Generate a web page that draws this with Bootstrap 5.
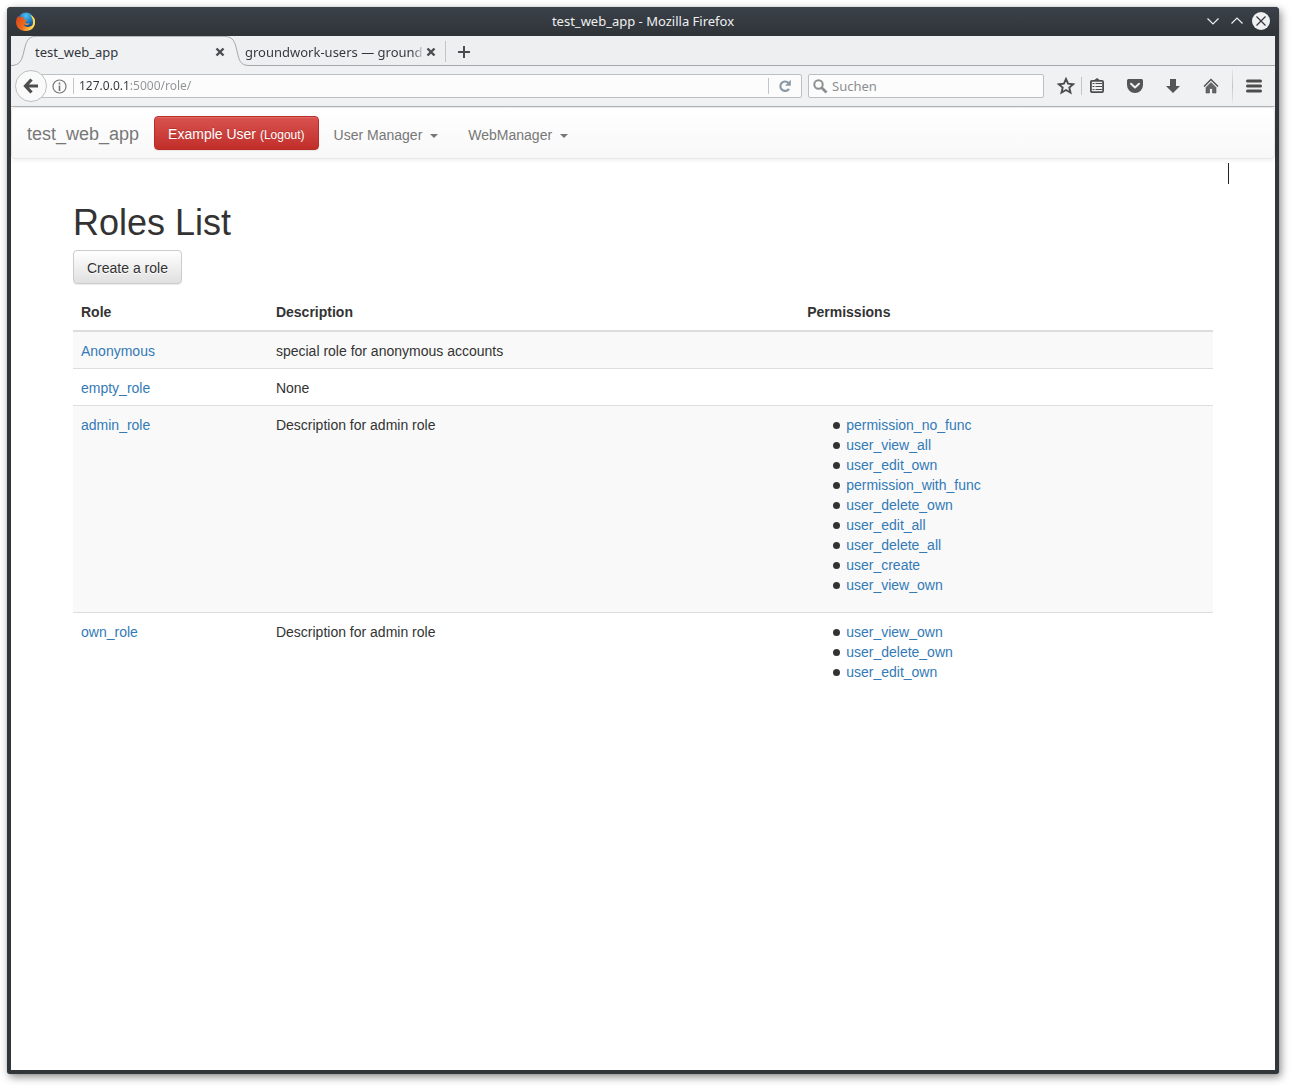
<!DOCTYPE html>
<html lang="en">
<head>
<meta charset="utf-8">
<meta name="viewport" content="width=device-width, initial-scale=1">
<title>test_web_app - Mozilla Firefox</title>
<link rel="stylesheet" href="https://cdn.jsdelivr.net/npm/bootstrap@5.3.0/dist/css/bootstrap.min.css">
<style>
  body { font-family: "Liberation Sans", Arial, sans-serif; font-size: 14px; line-height: 20px; color: #333; background: #fff; padding: 7px 13px 13px 7px; }
  svg { display: block; }
  .app-window { background: #31363b; border-radius: 4px 4px 3px 3px; box-shadow: 2px 3px 8px rgba(0,0,0,.45), 0 0 1px rgba(0,0,0,.35); }
  .chrome-text { font-family: "Noto Sans", sans-serif; font-size: 13px; line-height: 18px; }
  .plain-btn { border: 0; background: none; padding: 0; display: flex; align-items: center; justify-content: center; flex: none; }
  .title-bar { height: 29px; padding: 0 9px 1px; color: #eff0f1; background: linear-gradient(#3b4148, #2f3439); border-radius: 4px 4px 0 0; }
  .title-bar .plain-btn { width: 18px; height: 18px; }
  .window-controls { gap: 6px; }
  .window-body { margin: 0 4px 4px; background: #fff; }

  .tab-strip { height: 30px; background: #eeeff1; color: #31363b; }
  .tab-front { width: 190px; background: #f0f1f3; border-top: 1px solid #b4b8bb; }
  .tab-back { width: 196px; border-bottom: 1px solid #a5a8ab; padding: 2px 9px 0 0; }
  .tab-label { flex: 1; white-space: nowrap; color: inherit; text-decoration: none; }
  .tab-back .tab-label { margin-left: -4px; }
  .tab-fade { background: linear-gradient(90deg, #31363b 94%, #d0d2d4); -webkit-background-clip: text; background-clip: text; -webkit-text-fill-color: transparent; }
  .tab-close { width: 10px; height: 10px; }
  .tab-rest { border-bottom: 1px solid #a5a8ab; padding-top: 2px; }
  .v-rule { width: 1px; height: 16px; background: #c3c6c8; flex: none; }
  .v-rule.tab-rule { height: 21px; }
  .v-rule.url-rule { margin: 0 5px 0 6px; }
  .v-rule.star-rule { height: 18px; margin: 0 3px; }
  .v-rule.menu-rule { height: 34px; margin: 0 9px; background: linear-gradient(#e6e8ea, #c3c6c8, #e6e8ea); }

  .tool-bar { height: 41px; background: #f0f1f3; border-bottom: 1px solid #b5b9bc; padding: 0 9px 0 4px; color: #4d4d4d; }
  .back-btn { width: 32px; height: 32px; border: 1px solid #bcc0c3; border-radius: 50%; background: #fafafa; z-index: 1; }
  .field-box { height: 24px; background: #fcfcfc; border: 1px solid #bcc0c3; border-radius: 2px; }
  .url-box { margin-left: -16px; padding-left: 20px; }
  .bare-input { border: 0; outline: 0; padding: 0; min-width: 0; background: transparent; flex: 1; height: 18px; }
  .url-input { font-size: 12px; background: linear-gradient(90deg, #31363b 51px, #8f9294 51px); -webkit-background-clip: text; background-clip: text; -webkit-text-fill-color: transparent; }
  .reload-btn { width: 32px; }
  .search-box { width: 236px; margin-left: 6px; padding-left: 4px; }
  .search-input { color: #8c8f91; }
  .search-input::placeholder { color: #8c8f91; opacity: 1; }
  .tool-group { margin-left: 10px; }
  .tool-icons { gap: 14px; margin-left: 14px; }
  .tool-btn { width: 24px; height: 24px; color: inherit; }

  .site-nav { min-height: 52px; border: 1px solid #e7e7e7; border-radius: 4px; background: linear-gradient(#fff, #f8f8f8); box-shadow: inset 0 1px 0 rgba(255,255,255,.15), 0 1px 5px rgba(0,0,0,.075); padding: 0; }
  .site-nav .navbar-brand { font-size: 18px; line-height: 20px; color: #777; padding: 16px 15px 14px; margin: 0; }
  .site-nav .navbar-nav .nav-link { color: #777; padding: 17px 15px 13px; font-size: 14px; line-height: 20px; }
  .site-nav .dropdown-toggle::after { border-top-width: 4px; border-right-width: 4px; border-left-width: 4px; margin-left: 8px; vertical-align: 2px; }
  .grad-btn { font-size: 14px; line-height: 20px; padding: 7px 13px 5px; border-radius: 4px; }
  .btn-logout { color: #fff; border-color: #b92c28; background: linear-gradient(#d9534f, #c12e2a); text-shadow: 0 -1px 0 rgba(0,0,0,.2); box-shadow: inset 0 1px 0 rgba(255,255,255,.15), 0 1px 1px rgba(0,0,0,.075); }
  .btn-logout small { font-size: 12px; line-height: 12px; }
  .btn-create { color: #333; border-color: #ccc; background: linear-gradient(#fff, #e0e0e0); text-shadow: 0 1px 0 #fff; box-shadow: inset 0 1px 0 rgba(255,255,255,.15), 0 1px 1px rgba(0,0,0,.075); }
  .page-wrap { max-width: 1170px; padding: 44px 15px 0; }
  .page-title { font-size: 36px; line-height: 40px; font-weight: 400; margin: 0 0 7px; }
  .pointer-mark { top: 56px; right: 46px; width: 1px; height: 21px; background: #222; }

  .roles-table { --bs-table-color: #333; --bs-table-striped-color: #333; --bs-table-striped-bg: #f9f9f9; border-color: #ddd; margin: 10px 0 20px; }
  .roles-table > :not(caption) > * > * { padding: 9px 8px 7px; border-bottom: 0; border-top: 1px solid #ddd; }
  .roles-table > thead > tr > th { padding: 8px; border-top: 0; border-bottom: 2px solid #ddd; }
  .roles-table > tbody > tr:first-child > td { border-top: 0; }
  .roles-table a { color: #337ab7; text-decoration: none; }
  .col-role { width: 17.1%; }
  .col-desc { width: 46.6%; }
  .perm-list { list-style: none; padding-left: 26px; margin: 0 0 10px; }
  .perm-list li { display: flex; align-items: center; }
  .perm-list li::before { content: ""; width: 7px; height: 7px; border-radius: 50%; background: #333; margin-right: 6px; }
</style>
<script src="https://cdn.jsdelivr.net/npm/bootstrap@5.3.0/dist/js/bootstrap.bundle.min.js"></script>
</head>
<body class="min-vh-100 d-flex flex-column">
<div class="app-window flex-grow-1 d-flex flex-column">

  <header class="title-bar chrome-text d-flex align-items-center">
    <div class="flex-fill w-100">
      <svg width="19" height="19" viewBox="0 0 38 38" aria-hidden="true">
        <defs>
          <radialGradient id="globe" cx=".5" cy=".2" r=".8"><stop offset="0" stop-color="#4fc3ee"/><stop offset=".55" stop-color="#1b78c2"/><stop offset="1" stop-color="#14346f"/></radialGradient>
          <linearGradient id="fox" x1="0" y1="0" x2="1" y2=".4"><stop offset="0" stop-color="#d8431a"/><stop offset=".55" stop-color="#ee6a1c"/><stop offset="1" stop-color="#ffd24a"/></linearGradient>
        </defs>
        <circle cx="20" cy="17" r="16" fill="url(#globe)"/>
        <path d="M4 8l3 3c3-2 6-2 8-1-1 2 0 4 2 5l5 1c0 2-3 3-4 4 1 4 6 3 9 3-3 4-9 4-12 1 2 5 8 7 13 5 7-2 9-8 7-14-1-3-2-5-4-7 6 3 7 6 7 12 0 10-8 18-19 18S0 30 0 20C0 15 2 11 4 8z" fill="url(#fox)"/>
        <path d="M28 5c7 3 10 9 10 15 0 8-5 15-13 17 7-5 9-11 9-17 0-6-3-11-6-15z" fill="#ffd84f"/>
      </svg>
    </div>
    <div class="text-nowrap">test_web_app - Mozilla Firefox</div>
    <div class="window-controls flex-fill w-100 d-flex justify-content-end">
      <button type="button" class="plain-btn" aria-label="Minimize"><svg width="18" height="18" viewBox="0 0 18 18"><path d="M3.500 6.500L9 12l5.500-5.500" fill="none" stroke="#eff0f1" stroke-width="1.200"/></svg></button>
      <button type="button" class="plain-btn" aria-label="Maximize"><svg width="18" height="18" viewBox="0 0 18 18"><path d="M3.500 11.500L9 6l5.500 5.500" fill="none" stroke="#eff0f1" stroke-width="1.200"/></svg></button>
      <button type="button" class="plain-btn" aria-label="Close window"><svg width="18" height="18" viewBox="0 0 18 18"><circle cx="9" cy="9" r="9" fill="#eff0f1"/><path d="M4.500 4.500l9 9M13.500 4.500l-9 9" stroke="#31363b" stroke-width="1.200"/></svg></button>
    </div>
  </header>

  <div class="window-body flex-grow-1 d-flex flex-column">
    <div class="tab-strip chrome-text d-flex">
      <svg class="flex-shrink-0" width="24" height="30" viewBox="0 0 24 30" aria-hidden="true"><path d="M0 29.500C9 29.500 11 24 13 15S17 .5 24 .5V30H0z" fill="#f0f1f3"/><path d="M0 29.500C9 29.500 11 24 13 15S17 .5 24 .5" fill="none" stroke="#a5a8ab"/></svg>
      <div class="tab-front d-flex align-items-center">
        <a href="#" class="tab-label">test_web_app</a>
        <button type="button" class="plain-btn tab-close" aria-label="Close tab"><svg width="10" height="10" viewBox="0 0 10 10"><path d="M1.500 1.500l7 7M8.500 1.500l-7 7" stroke="#4a4d4f" stroke-width="2.400"/></svg></button>
      </div>
      <svg class="flex-shrink-0" width="24" height="30" viewBox="0 0 24 30" aria-hidden="true"><path d="M0 .5C8 .5 10 6 12 15S15 29.500 24 29.500V30H0z" fill="#f0f1f3"/><path d="M0 .5C8 .5 10 6 12 15S15 29.500 24 29.500" fill="none" stroke="#a5a8ab"/></svg>
      <div class="tab-back d-flex align-items-center">
        <a href="#" class="tab-label"><span class="tab-fade">groundwork-users — ground</span></a>
        <button type="button" class="plain-btn tab-close" aria-label="Close tab"><svg width="10" height="10" viewBox="0 0 10 10"><path d="M1.500 1.500l7 7M8.500 1.500l-7 7" stroke="#4a4d4f" stroke-width="2.400"/></svg></button>
      </div>
      <div class="tab-rest flex-grow-1 d-flex align-items-center">
        <span class="v-rule tab-rule"></span>
        <button type="button" class="plain-btn ms-2" aria-label="New tab"><svg width="20" height="20" viewBox="0 0 20 20"><path d="M10 4v12M4 10h12" stroke="#4a4d4f" stroke-width="2"/></svg></button>
      </div>
    </div>

    <div class="tool-bar chrome-text d-flex align-items-center">
      <button type="button" class="plain-btn back-btn" aria-label="Back"><svg width="16" height="16" viewBox="0 0 16 16"><path d="M8.500 1.500L2.500 8l6 6.500M3 8h12" fill="none" stroke="#4d4d4d" stroke-width="3.200"/></svg></button>
      <div class="field-box url-box flex-grow-1 d-flex align-items-center">
        <svg class="flex-shrink-0" width="15" height="15" viewBox="0 0 15 15" aria-hidden="true"><circle cx="7.500" cy="7.500" r="6.500" fill="none" stroke="#737679" stroke-width="1.200"/><path d="M7.500 3.500v2M7.500 6.500V12" stroke="#737679" stroke-width="1.600"/></svg>
        <span class="v-rule url-rule"></span>
        <input type="text" class="bare-input url-input" aria-label="Address" value="127.0.0.1:5000/role/">
        <span class="v-rule"></span>
        <button type="button" class="plain-btn reload-btn" aria-label="Reload"><svg width="14" height="14" viewBox="0 0 14 14"><path d="M10.500 4A4.700 4.700 0 1 0 11 9.800" fill="none" stroke="#8b98a5" stroke-width="2.200"/><path d="M12.800.8v5.900H7z" fill="#8b98a5"/></svg></button>
      </div>
      <div class="field-box search-box d-flex align-items-center flex-shrink-0">
        <svg class="flex-shrink-0 me-1" width="15" height="15" viewBox="0 0 15 15" aria-hidden="true"><circle cx="5.500" cy="5.500" r="4.200" fill="none" stroke="#8c8f91" stroke-width="2"/><path d="M8.500 8.500l5 5" stroke="#8c8f91" stroke-width="2.600"/></svg>
        <input type="search" class="bare-input search-input" aria-label="Suchen" placeholder="Suchen">
      </div>
      <div class="tool-group d-flex align-items-center flex-shrink-0">
        <button type="button" class="plain-btn tool-btn" aria-label="Bookmark"><svg width="18" height="18" viewBox="0 0 18 18"><path d="M9 2l2.100 4.700 5.100.5-3.900 3.400 1.200 5L9 13l-4.500 2.600 1.200-5L1.800 7.200l5.100-.5z" fill="none" stroke="currentColor" stroke-width="1.900"/></svg></button>
        <span class="v-rule star-rule"></span>
        <button type="button" class="plain-btn tool-btn" aria-label="Bookmark list"><svg width="16" height="16" viewBox="0 0 16 16"><path d="M4 3L8 0l4 3z" fill="currentColor"/><rect x="1.900" y="2.900" width="12.200" height="11.200" rx="1" fill="none" stroke="currentColor" stroke-width="1.800"/><path d="M3.500 5.500h2M3.500 8.500h2M3.500 11.500h2M6.500 5.500h6.500M6.500 8.500h6.500M6.500 11.500h6.500" stroke="currentColor"/></svg></button>
        <div class="tool-icons d-flex">
          <button type="button" class="plain-btn tool-btn" aria-label="Pocket"><svg width="16" height="16" viewBox="0 0 16 16"><path d="M1.500 1h13A1.500 1.500 0 0 1 16 2.500V7A8 8 0 0 1 0 7V2.500A1.500 1.500 0 0 1 1.500 1z" fill="#555"/><path d="M4 5.800l4 3.700 4-3.700" fill="none" stroke="#f0f1f3" stroke-width="2" stroke-linecap="round" stroke-linejoin="round"/></svg></button>
          <button type="button" class="plain-btn tool-btn" aria-label="Downloads"><svg width="16" height="16" viewBox="0 0 16 16"><path d="M5 1h6v7h4l-7 7-7-7h4z" fill="#555"/></svg></button>
          <button type="button" class="plain-btn tool-btn" aria-label="Home"><svg width="16" height="16" viewBox="0 0 16 16"><path d="M1 8.500l7-7 7 7" fill="none" stroke="currentColor" stroke-width="1.400"/><path d="M3 9.500l5-5 5 5V15H9.500v-4.500h-3V15H3z" fill="#666" stroke="currentColor" stroke-width=".6"/></svg></button>
        </div>
        <span class="v-rule menu-rule"></span>
        <button type="button" class="plain-btn tool-btn" aria-label="Menu"><svg width="16" height="14" viewBox="0 0 16 14"><path d="M1.500 2h13M1.500 7h13M1.500 12h13" stroke="currentColor" stroke-width="3" stroke-linecap="round"/></svg></button>
      </div>
    </div>

    <div class="position-relative">
      <nav class="navbar navbar-expand site-nav">
        <div class="d-flex align-items-center">
          <a class="navbar-brand" href="#">test_web_app</a>
          <a class="btn grad-btn btn-logout" href="#">Example User <small>(Logout)</small></a>
          <ul class="navbar-nav">
            <li class="nav-item dropdown"><a class="nav-link dropdown-toggle" href="#" role="button" data-bs-toggle="dropdown">User Manager</a></li>
            <li class="nav-item dropdown"><a class="nav-link dropdown-toggle" href="#" role="button" data-bs-toggle="dropdown">WebManager</a></li>
          </ul>
        </div>
      </nav>
      <span class="pointer-mark position-absolute"></span>

      <main class="container-fluid page-wrap">
        <h1 class="page-title">Roles List</h1>
        <button type="button" class="btn grad-btn btn-create">Create a role</button>
        <table class="table table-striped roles-table">
          <thead>
            <tr><th class="col-role" scope="col">Role</th><th class="col-desc" scope="col">Description</th><th scope="col">Permissions</th></tr>
          </thead>
          <tbody>
            <tr><td><a href="#">Anonymous</a></td><td>special role for anonymous accounts</td><td></td></tr>
            <tr><td><a href="#">empty_role</a></td><td>None</td><td></td></tr>
            <tr>
              <td><a href="#">admin_role</a></td><td>Description for admin role</td>
              <td><ul class="perm-list">
                <li><a href="#">permission_no_func</a></li>
                <li><a href="#">user_view_all</a></li>
                <li><a href="#">user_edit_own</a></li>
                <li><a href="#">permission_with_func</a></li>
                <li><a href="#">user_delete_own</a></li>
                <li><a href="#">user_edit_all</a></li>
                <li><a href="#">user_delete_all</a></li>
                <li><a href="#">user_create</a></li>
                <li><a href="#">user_view_own</a></li>
              </ul></td>
            </tr>
            <tr>
              <td><a href="#">own_role</a></td><td>Description for admin role</td>
              <td><ul class="perm-list">
                <li><a href="#">user_view_own</a></li>
                <li><a href="#">user_delete_own</a></li>
                <li><a href="#">user_edit_own</a></li>
              </ul></td>
            </tr>
          </tbody>
        </table>
      </main>
    </div>
  </div>
</div>
</body>
</html>
